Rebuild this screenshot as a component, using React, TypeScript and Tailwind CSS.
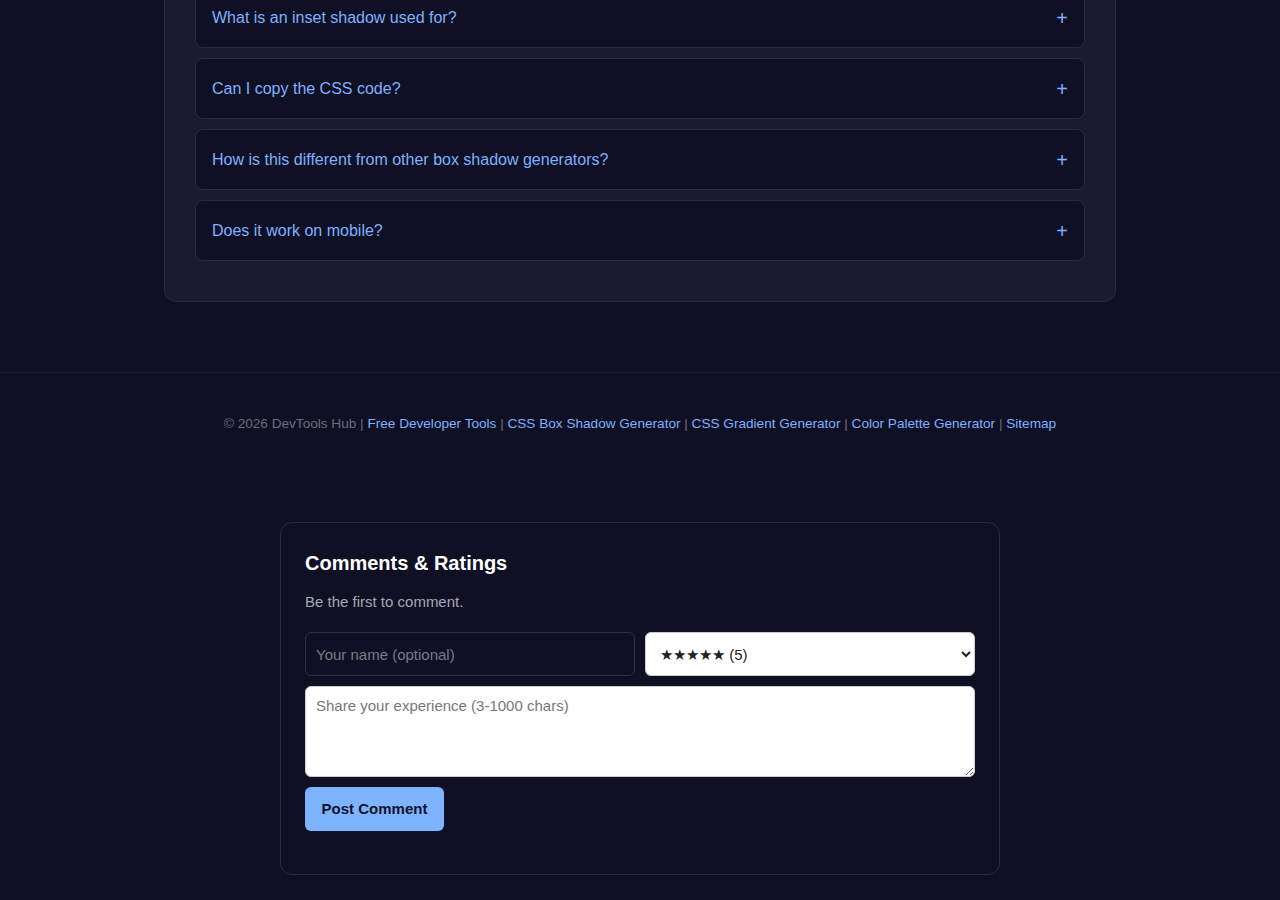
import React, { useState } from 'react';

const faqs = [
  'What is an inset shadow used for?',
  'Can I copy the CSS code?',
  'How is this different from other box shadow generators?',
  'Does it work on mobile?',
];

const footerLinks = [
  'Free Developer Tools',
  'CSS Box Shadow Generator',
  'CSS Gradient Generator',
  'Color Palette Generator',
  'Sitemap',
];

export default function App() {
  const [open, setOpen] = useState<number | null>(null);
  const [name, setName] = useState('');
  const [rating, setRating] = useState('5');
  const [text, setText] = useState('');

  return (
    <div className="min-h-[900px] bg-[#0f1024] font-['Liberation_Sans',Arial,sans-serif] overflow-hidden">
      {/* FAQ panel (scrolled, top is cut off) */}
      <div className="w-[952px] mx-auto -mt-[44px] bg-[#1a1b2e] border border-[#2a2b48] rounded-[12px] px-[30px] pt-[30px] pb-[40px]">
        {faqs.map((q, i) => (
          <div
            key={q}
            className={`bg-[#0f1024] border border-[#2a2b48] rounded-[8px] ${i < faqs.length - 1 ? 'mb-[10px]' : ''}`}
          >
            <button
              onClick={() => setOpen(open === i ? null : i)}
              className="w-full h-[59px] flex items-center justify-between px-4 text-left text-[16px] text-[#7eb0ff] cursor-pointer"
            >
              <span>{q}</span>
              <span className="text-[20px] leading-none">+</span>
            </button>
          </div>
        ))}
      </div>

      {/* Footer */}
      <footer className="mt-[70px] border-t border-[#1f2036] pt-[41px] pb-[39px] text-center text-[13.6px] leading-5 text-[#6b6b7a]">
        © 2026 DevTools Hub
        {footerLinks.map((l) => (
          <React.Fragment key={l}>
            {' | '}
            <a href="#" className="text-[#7eb0ff]">{l}</a>
          </React.Fragment>
        ))}
      </footer>

      {/* Comments */}
      <section className="w-[720px] mx-auto mt-[49px] border border-[#2a2b40] rounded-[12px] px-6 pt-6 pb-[43px]">
        <h3 className="text-[20px] leading-[32px] font-bold text-white">Comments &amp; Ratings</h3>
        <p className="mt-[12px] text-[15px] leading-[22px] text-[#a8a8b3]">Be the first to comment.</p>
        <div className="mt-[19px] grid grid-cols-2 gap-[10px]">
          <input
            value={name}
            onChange={(e) => setName(e.target.value)}
            placeholder="Your name (optional)"
            className="h-[44px] px-[10px] rounded-[6px] border border-[#2e2f48] bg-[#0f1024] text-[15px] text-white placeholder:text-[#7a7a86] outline-none"
          />
          <select
            value={rating}
            onChange={(e) => setRating(e.target.value)}
            className="h-[44px] px-[10px] rounded-[6px] border border-[#ccc] bg-white text-[15px] text-[#222]"
          >
            <option value="5">★★★★★ (5)</option>
            <option value="4">★★★★☆ (4)</option>
            <option value="3">★★★☆☆ (3)</option>
            <option value="2">★★☆☆☆ (2)</option>
            <option value="1">★☆☆☆☆ (1)</option>
          </select>
        </div>
        <textarea
          value={text}
          onChange={(e) => setText(e.target.value)}
          placeholder="Share your experience (3-1000 chars)"
          className="mt-[10px] block w-full h-[91px] px-[10px] py-[8px] rounded-[6px] border border-[#ccc] bg-white text-[15px] text-[#222] placeholder:text-[#777] outline-none"
        />
        <button className="mt-[10px] h-[44px] w-[139px] rounded-[6px] bg-[#7eb3ff] text-[15px] font-bold text-[#10122a] cursor-pointer">
          Post Comment
        </button>
      </section>
    </div>
  );
}
